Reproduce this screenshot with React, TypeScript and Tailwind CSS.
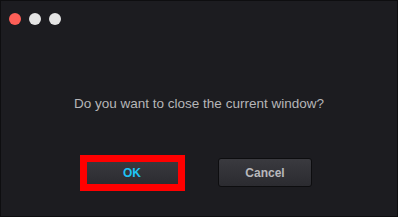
export default function App() {
  return (
    <div
      className="w-[398px] h-[217px] bg-[#1c1c20] border border-[#0e0e10] flex flex-col"
      style={{ fontFamily: '"Liberation Sans", Arial, sans-serif' }}
    >
      <div className="flex gap-2 pl-2 pt-3">
        <span className="w-3 h-3 rounded-full bg-[#fe5f57]" />
        <span className="w-3 h-3 rounded-full bg-[#e4e4e4]" />
        <span className="w-3 h-3 rounded-full bg-[#e4e4e4]" />
      </div>
      <p className="mt-[71px] text-center text-[13.5px] leading-4 text-[#b6b6b8]">
        Do you want to close the current window?
      </p>
      <div className="mt-[46px] flex justify-center gap-[39px] pr-[1px]">
        <div className="relative">
          <button className="w-[94px] h-[29px] rounded-[3px] border border-[#0d0d0f] bg-gradient-to-b from-[#3a3a3f] to-[#2b2b30] text-[12px] font-bold text-[#1ec4f5]">
            OK
          </button>
          <div className="absolute left-[-5px] top-[-3px] w-[105px] h-[36px] border-[7px] border-[#ff0000]" />
        </div>
        <button className="w-[94px] h-[29px] rounded-[3px] border border-[#0d0d0f] bg-gradient-to-b from-[#3a3a3f] to-[#2b2b30] text-[12px] font-bold text-[#b8b8bc]">
          Cancel
        </button>
      </div>
    </div>
  );
}
